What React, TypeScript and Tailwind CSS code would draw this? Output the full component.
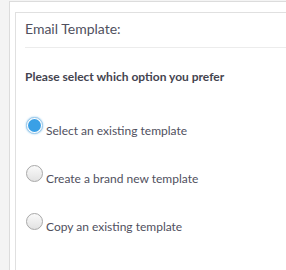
import React from 'react';

const options = [
  { label: 'Select an existing template', checked: true },
  { label: 'Create a brand new template', checked: false },
  { label: 'Copy an existing template', checked: false },
];

const Radio: React.FC<{ checked: boolean }> = ({ checked }) =>
  checked ? (
    <span className="w-[17px] h-[17px] rounded-full border border-[#9cc9ea] bg-white flex items-center justify-center shrink-0 shadow-[0_0_2px_#7fbfea]">
      <span className="w-[13px] h-[13px] rounded-full bg-[#3aa0e6]" />
    </span>
  ) : (
    <span className="w-[17px] h-[17px] rounded-full border border-[#a8a8a8] bg-gradient-to-b from-[#fafafa] to-[#e2e2e2] shrink-0" />
  );

export default function App() {
  return (
    <div className="h-[270px] bg-[#f4f4f4] pl-[9px] pt-[1px] overflow-hidden" style={{ fontFamily: 'Lato, "Open Sans", sans-serif' }}>
      {/* Outer box */}
      <div className="h-full bg-white border-l border-t border-[#dcdcdc] pl-[5px] pt-[10px]">
        {/* Card */}
        <div className="h-full bg-white border-l border-t border-[#e0e0e0] pl-[9px]">
          <div className="h-[35px] flex items-end pb-[11px] border-b border-[#ececec] text-[14px] text-[#50505e] leading-none">
            Email Template:
          </div>
          <p className="mt-[23px] text-[12px] font-bold text-[#44444f] leading-none">Please select which option you prefer</p>
          <div className="mt-[34px] flex flex-col gap-[31px] pl-[1px]">
            {options.map((o) => (
              <label key={o.label} className="flex items-start gap-[3px] h-[17px]">
                <Radio checked={o.checked} />
                <span className="text-[12px] text-[#50505e] leading-none mt-[8px]">{o.label}</span>
              </label>
            ))}
          </div>
        </div>
      </div>
    </div>
  );
}
